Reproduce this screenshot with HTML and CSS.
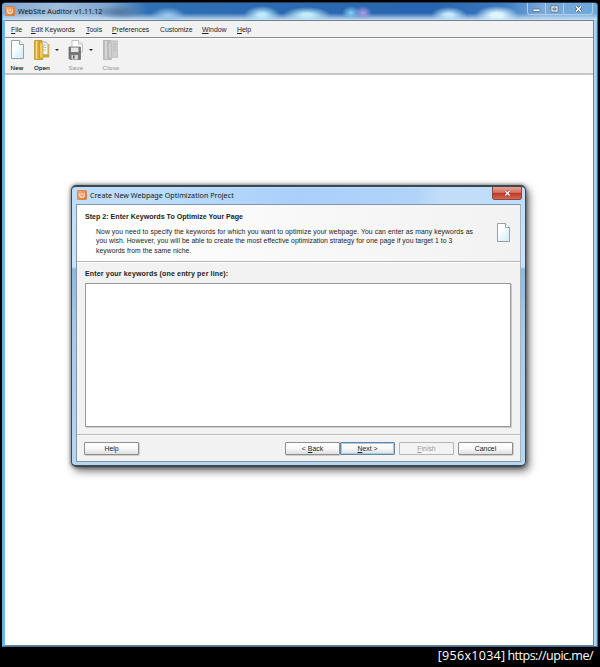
FILE: index.html
```
<!DOCTYPE html>
<html lang="en">

<head>
    <meta charset="UTF-8">
    <title>WebSite Auditor v1.11.12</title>
    <link rel="stylesheet" href="styles.css">
</head>

<body>
    <svg class="defs" width="0" height="0">
        <defs>
            <linearGradient id="orange" x1="0" y1="0" x2="1" y2="1">
                <stop offset="0" stop-color="#f7b27c" />
                <stop offset="1" stop-color="#df6c20" />
            </linearGradient>
            <linearGradient id="paper" x1="0" y1="0" x2="1" y2="1">
                <stop offset=".3" stop-color="#ffffff" />
                <stop offset="1" stop-color="#c9eafa" />
            </linearGradient>
            <symbol id="logo" viewBox="0 0 10 10">
                <rect x=".4" y=".4" width="9.2" height="9.2" rx="1" fill="url(#orange)" stroke="#d9773a" stroke-width=".8" />
                <path d="M2.8 3.2v2.6q0 1.5 2.2 1.5t2.2-1.5V3.2M5 2.8v2.5" fill="none" stroke="#fff3e6" stroke-width="1.1" />
            </symbol>
            <symbol id="page" viewBox="0 0 13 19">
                <path d="M.5.5H8.5L12.5 4.5V18.5H.5Z" fill="url(#paper)" stroke="#8c979c" stroke-width=".9" />
                <path d="M8.5.5V4.5H12.5" fill="#fff" stroke="#8c979c" stroke-width=".9" />
            </symbol>
        </defs>
    </svg>

    <div class="window">
        <div class="titlebar">
            <svg class="logo"><use href="#logo" /></svg>
            <span class="title">WebSite Auditor v1.11.12</span>
            <div class="controls">
                <span><svg width="9" height="8" viewBox="0 0 9 8"><rect x="1" y="4" width="7" height="2.5" rx=".5" fill="#fff" stroke="#52647c" stroke-width=".8" /></svg></span>
                <span><svg width="9" height="8" viewBox="0 0 9 8"><rect x="1" y="1" width="7" height="6" rx=".5" fill="#fff" stroke="#52647c" stroke-width=".8" /><rect x="3" y="3" width="3" height="2" fill="#b3c4dc" stroke="#52647c" stroke-width=".8" /></svg></span>
                <span class="wide"><svg width="9" height="8" viewBox="0 0 9 8"><path d="M2 1.5L7 6.5M7 1.5L2 6.5" stroke="#52647c" stroke-width="3" /><path d="M2 1.5L7 6.5M7 1.5L2 6.5" stroke="#fff" stroke-width="1.4" /></svg></span>
            </div>
        </div>

        <div class="client">
            <div class="menu">
                <span><u>F</u>ile</span>
                <span><u>E</u>dit Keywords</span>
                <span><u>T</u>ools</span>
                <span><u>P</u>references</span>
                <span>Customize</span>
                <span><u>W</u>indow</span>
                <span><u>H</u>elp</span>
            </div>

            <div class="toolbar">
                <div class="tool">
                    <svg width="13" height="19"><use href="#page" /></svg>
                    <span>New</span>
                </div>
                <div class="tool">
                    <svg width="16" height="20" viewBox="0 0 16 20">
                        <path d="M.5.5H8V19.5H.5Z" fill="#d9a92c" stroke="#b48a25" stroke-width=".7" />
                        <path d="M2.5 1V19" stroke="#f5dc83" stroke-width="1.5" />
                        <path d="M7 2H12L14 4.5V15H7Z" fill="#f6f8f8" stroke="#7f8785" stroke-width=".7" />
                        <path d="M9.5 5H12M9.5 7.5H12M9.5 10H12" stroke="#9aa6ab" stroke-width=".8" />
                        <path d="M5.5 1.5L9 4V19.5L5.5 17Z" fill="#efcc5c" stroke="#b48a25" stroke-width=".6" />
                        <path d="M9 17.5H15.3V4H14.3V14.5H9Z" fill="#d0a537" />
                    </svg>
                    <span>Open</span>
                </div>
                <i class="arrow"></i>
                <div class="tool disabled">
                    <svg width="16" height="20" viewBox="0 0 16 20">
                        <path d="M4 .5H10.5L14.5 4V12H4Z" fill="#fff" stroke="#b2b2b2" stroke-width=".8" />
                        <path d="M10.5.5V4H14.5" fill="#eee" stroke="#b2b2b2" stroke-width=".8" />
                        <path d="M1 7H12.5V19.5H2L1 18.5Z" fill="#777" stroke="#646464" stroke-width=".7" />
                        <path d="M3 7.5H10.5V12H3Z" fill="#e7e7e7" />
                        <path d="M3.5 15H10V19.5H3.5Z" fill="#d5d5d5" />
                        <path d="M5 15.5H6.5V18.5H5Z" fill="#555" />
                    </svg>
                    <span>Save</span>
                </div>
                <i class="arrow"></i>
                <div class="tool disabled close-tool">
                    <svg width="16" height="20" viewBox="0 0 16 20">
                        <path d="M.5.5H8V19.5H.5Z" fill="#bdbdbd" stroke="#aaa" stroke-width=".7" />
                        <path d="M3 1V19" stroke="#ddd" stroke-width="1.5" />
                        <path d="M7 .8H14.5V17.5H7Z" fill="#cdcdcd" stroke="#bbb" stroke-width=".7" />
                        <path d="M5.5 1.5L8.5 4V19.5L5.5 17Z" fill="#d2d2d2" stroke="#b2b2b2" stroke-width=".6" />
                        <path d="M10.5 4H13M10.5 7H13M10.5 10H13" stroke="#b4b4b4" stroke-width=".8" />
                    </svg>
                    <span>Close</span>
                </div>
            </div>
            <div class="workspace"></div>
        </div>
    </div>

    <div class="dialog">
        <div class="dialog-title">
            <svg class="logo"><use href="#logo" /></svg>
            <span class="title">Create New Webpage Optimization Project</span>
            <div class="close"><svg width="9" height="8" viewBox="0 0 9 8"><path d="M2.3 2L6.7 6.5M6.7 2L2.3 6.5" stroke="#702c2c" stroke-width="2.5" /><path d="M2.3 2L6.7 6.5M6.7 2L2.3 6.5" stroke="#fff" stroke-width="1.4" /></svg></div>
        </div>
        <div class="dialog-body">
            <div class="step">
                <div>
                    <h1>Step 2: Enter Keywords To Optimize Your Page</h1>
                    <p>
                        <span class="wider">Now you need to specify the keywords for which you want to optimize your webpage. You can enter as many keywords as</span><br>
                        <span>you wish. However, you will be able to create the most effective optimization strategy for one page if you target 1 to 3</span><br>
                        <span>keywords from the same niche.</span>
                    </p>
                </div>
                <svg class="step-icon" width="13" height="19"><use href="#page" /></svg>
            </div>
            <div class="entry">
                <h2>Enter your keywords (one entry per line):</h2>
                <div class="keywords"></div>
            </div>
            <div class="buttons">
                <div class="btn help">Help</div>
                <div class="btn"><span>&lt; <u>B</u>ack</span></div>
                <div class="btn default"><span><u>N</u>ext &gt;</span></div>
                <div class="btn off"><span><u>F</u>inish</span></div>
                <div class="btn">Cancel</div>
            </div>
        </div>
    </div>

    <div class="watermark"><span>[956x1034]</span><span class="site">https://upic.me/</span></div>
</body>

</html>
```

FILE: styles.css
```
* {
    box-sizing: border-box;
}

body {
    margin: 0;
    width: 600px;
    height: 667px;
    padding: 2px 2px 0;
    background: #000;
    overflow: hidden;
    position: relative;
    font-family: "Liberation Sans", Arial, sans-serif;
    font-size: 6.9px;
    color: #222;
    white-space: nowrap;
}

.defs {
    position: absolute;
}

.window {
    height: 645px;
    padding: 0 3px 0 2px;
    border: 1px solid #426e98;
    border-top-color: #273e58;
    border-left-color: #62aee0;
    border-radius: 4px 4px 0 0;
    background: linear-gradient(90deg, #62aee0 0, #8fc4ea 3px, #8fc4ea 590px, #b7ddf4 592px, #4daddb 595px);
}

.titlebar {
    display: flex;
    align-items: flex-start;
    height: 17px;
    margin: 0 -3px 0 -2px;
    padding: 3px 0 0 2px;
    border-radius: 3px 3px 0 0;
    background:
        radial-gradient(ellipse 22px 9px at 494px 12px, #dff6ff 25%, transparent),
        radial-gradient(ellipse 24px 8px at 304px 12px, #c3edfa 20%, transparent),
        radial-gradient(ellipse 18px 9px at 259px 12px, #bdeafb 20%, transparent),
        radial-gradient(ellipse 9px 7px at 348px 10px, #80c9ef 10%, transparent),
        radial-gradient(ellipse 9px 7px at 360px 10px, #a79ae2 10%, transparent),
        radial-gradient(ellipse 18px 8px at 446px 12px, #c3e9fc 20%, transparent),
        radial-gradient(ellipse 18px 9px at 165px 13px, #9bc7ee 10%, transparent),
        radial-gradient(ellipse 26px 7px at 117px 9px, #54799f 0, transparent),
        linear-gradient(transparent 60%, #c8dff3 100%),
        linear-gradient(90deg, #84a8cc 0, #a0bedb 55px, #7fa6d0 105px, #2f6fb4 145px, #2764b0 430px, #3a7ac0 500px, #79aadb 540px, #6ca9dd 100%);
}

.logo {
    width: 10px;
    height: 10px;
    flex: none;
}

.title {
    font-family: "Noto Sans", "Open Sans", sans-serif;
    font-size: 7.2px;
    line-height: 10px;
    color: #101820;
    margin-left: 3px;
}

.controls {
    display: flex;
    margin: -3px 4px 0 auto;
    height: 12px;
    border: 1px solid #b4cce6;
    border-top: 0;
    border-radius: 0 0 3px 3px;
}

.controls span {
    display: flex;
    align-items: center;
    justify-content: center;
    width: 18px;
    border-right: 1px solid #b4cce6;
}

.controls .wide {
    width: 28px;
    border: 0;
}

.client {
    height: 626px;
    display: flex;
    flex-direction: column;
    border: 1px solid #6e8290;
    border-left-width: 0;
    background: #f2f2f2;
}

.menu {
    display: grid;
    grid-template-columns: 20px 55px 26px 48px 42px 35px auto;
    height: 17px;
    padding-left: 6px;
    line-height: 17px;
    border-bottom: 1px solid #8b8b8b;
    background: #f2f2f2;
    flex: none;
}

u {
    text-decoration-thickness: 1px;
    text-underline-offset: 1px;
}

.toolbar {
    display: flex;
    height: 37px;
    padding: 1px 0 0 3px;
    border-top: 1px solid #fff;
    border-bottom: 2px solid #c6c6c6;
    flex: none;
}

.tool {
    display: flex;
    flex-direction: column;
    align-items: center;
    justify-content: space-between;
    width: 18px;
    height: 31px;
    font-size: 6.2px;
    line-height: 7px;
    color: #000;
    letter-spacing: .25px;
    -webkit-text-stroke: .1px;
}

.tool + .tool {
    margin-left: 7px;
}

.disabled {
    color: #a3a3a3;
}

.arrow {
    width: 0;
    height: 0;
    margin: 9px 7px 0 4px;
    border: 2px solid transparent;
    border-top-color: #222;
    border-bottom: 0;
}

.arrow + .tool {
    margin-left: 1px;
}

.arrow + .close-tool {
    margin-left: 2px;
}

.workspace {
    flex: 1;
    background: #fff;
}

/* wizard window floats over the workspace */
.dialog {
    position: absolute;
    left: 71px;
    top: 185px;
    width: 455px;
    height: 282px;
    padding: 1px 4px 4px;
    border: 2px solid #3a4854;
    border-width: 2px 1.5px;
    border-radius: 5px;
    background: linear-gradient(#bddcf9 0, #cae3f9 80px, #8db8df 82px, #a7c9e7 140px, #b7d7f1 100%);
    box-shadow: 0 0 4px rgba(0, 0, 0, .6), 3px 4px 9px rgba(0, 0, 0, .55);
}

.dialog-title {
    display: flex;
    height: 16px;
    padding: 2px 0 0 1px;
    background: linear-gradient(100deg, transparent 15%, #a9d0fb 50%, #b1d3f8 76%, #c3ddf8 82%, transparent);
}

.dialog-title .title {
    letter-spacing: 0;
}

.close {
    display: flex;
    justify-content: center;
    align-items: center;
    width: 30px;
    height: 13px;
    margin: -3px -1px 0 auto;
    border: 1px solid #8c4545;
    border-top: 0;
    border-radius: 0 0 3px 3px;
    background: linear-gradient(#e6a18f, #d77565 45%, #bd3526 50%, #d46a4f);
}

.dialog-body {
    height: 258px;
    border: 1px solid #8097a9;
    border-right-color: #a5b4bd;
    background: #f2f2f2;
}

.step {
    display: flex;
    justify-content: space-between;
    height: 57px;
    padding: 7px 10px 0 8px;
    border-bottom: 1px solid #b6b6b6;
    background: linear-gradient(90deg, #fff, #f2f2f2);
}

h1,
h2 {
    margin: 0;
    font-size: 7.1px;
    line-height: 10px;
    font-weight: bold;
}

h2 {
    letter-spacing: .12px;
}

p {
    margin: 5px 0 0 11px;
    font-size: 6.8px;
    line-height: 9.4px;
    letter-spacing: .045px;
}

.wider {
    letter-spacing: .095px;
}

.step-icon {
    margin-top: 11px;
}

.entry {
    height: 173px;
    padding: 6px 9px 0 8px;
    border-top: 1px solid #fff;
    border-bottom: 1px solid #bbb;
}

.keywords {
    height: 144px;
    margin-top: 4px;
    border: 1px solid #999;
    box-shadow: 1px 1px 0 #ccc;
    background: #fff;
}

.buttons {
    display: flex;
    gap: 4px;
    padding: 6px 7px 0;
    border-top: 1px solid #fafafa;
}

.btn {
    display: flex;
    align-items: center;
    justify-content: center;
    width: 55px;
    height: 13px;
    border: 1px solid #8f8f8f;
    border-radius: 1px;
    background: linear-gradient(#fff, #f8f8f8 50%, #dedede);
    box-shadow: .5px .5px 0 #aaa;
}

.help {
    margin-right: auto;
}

.default {
    margin-left: -4px;
    border-color: #6685a3;
    box-shadow: inset 0 0 0 1px #a8cce8;
}

.off {
    color: #999;
    border-color: #b5b5b5;
    background: #f3f3f3;
    box-shadow: none;
}

.watermark {
    display: flex;
    justify-content: flex-end;
    padding: 0 5px 0 0;
    font-family: "Open Sans", sans-serif;
    font-size: 12.5px;
    line-height: 18px;
    color: #fff;
}

.site {
    margin-left: 2px;
    letter-spacing: -.5px;
    font-weight: 500;
}

.watermark span:first-child {
    letter-spacing: .3px;
}
```
